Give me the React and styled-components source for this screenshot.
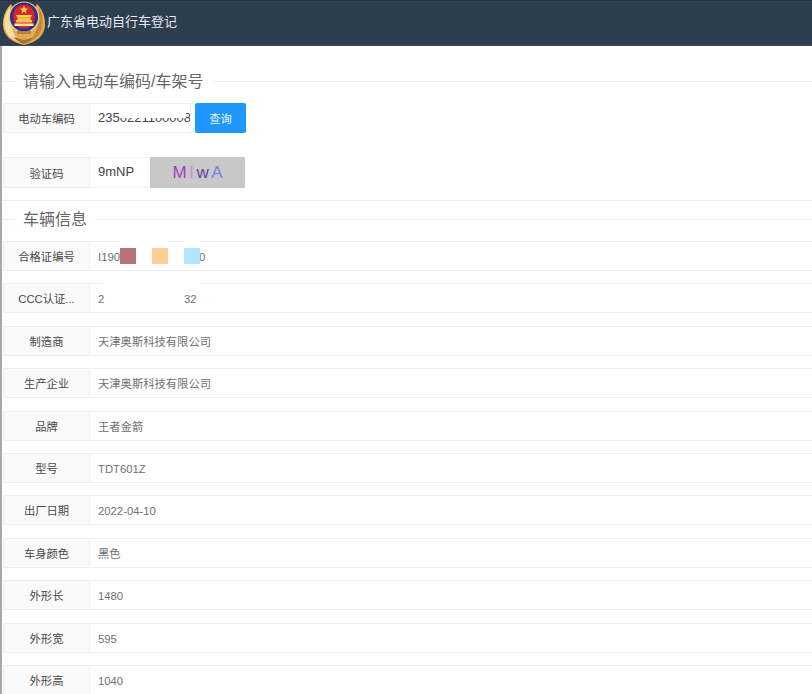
import React from "react";
import styled, { createGlobalStyle } from "styled-components";

const GlobalStyle = createGlobalStyle`
  html, body {
    margin: 0;
    padding: 0;
    background: #fff;
    overflow: hidden;
  }
  body {
    font-family: "Liberation Sans", "Noto Sans CJK SC", sans-serif;
  }
`;

const rows = [
  { label: "合格证编号", value: "I190", tail: "0", masks: "blocks" },
  { label: "CCC认证...", value: "2", tail: "32", masks: "plain", wide: true },
  { label: "制造商", value: "天津奥斯科技有限公司" },
  { label: "生产企业", value: "天津奥斯科技有限公司" },
  { label: "品牌", value: "王者金箭" },
  { label: "型号", value: "TDT601Z" },
  { label: "出厂日期", value: "2022-04-10" },
  { label: "车身颜色", value: "黑色" },
  { label: "外形长", value: "1480" },
  { label: "外形宽", value: "595" },
  { label: "外形高", value: "1040" },
];

function Emblem() {
  return (
    <svg width="46" height="46" viewBox="0 0 46 46">
      {/* wreath */}
      <path d="M10 4C4 10 1.500 18 2 26C3 36 10 42 23 45C36 42 43 36 44 26C44.500 18 42 10 36 4L23 28Z" fill="#e2ab52" />
      <path d="M9 7C4 13 2.500 20 3.500 27C5 35 11 40 20 43C14 37 8 30 9 7Z" fill="#f8e0a4" />
      <path d="M12 37C16 41 20 43 23 44C26 43 30 41 34 37L23 40Z" fill="#a8732c" />
      <path d="M38 8C42 16 43 25 39 33C37 37 33 39 28 42C35 34 39 25 38 8Z" fill="#c4883a" />
      {/* shield */}
      <ellipse cx="23" cy="17.500" rx="15.500" ry="16" fill="#ecc873" />
      <ellipse cx="23" cy="17" rx="14" ry="14.500" fill="#2b2f94" />
      <ellipse cx="23" cy="16.500" rx="11" ry="12" fill="#d7262b" />
      {/* star and gate */}
      <path d="M23 5.500l1.100 3h3.100l-2.500 1.900 1 3-2.700-1.800-2.700 1.800 1-3-2.500-1.900h3.100z" fill="#f7d64a" />
      <path d="M15 15h16l-1.500 2.500h-13z" fill="#f7d64a" />
      <path d="M16.500 17.500h13V20H31v2.500H15V20h1.500z" fill="#f1c64c" />
      <rect x="13.500" y="23.500" width="19" height="2.500" fill="#fbe6a0" />
      <rect x="16" y="31" width="14" height="3" fill="#b5833a" />
    </svg>
  );
}

export default function App() {
  return (
    <Page>
      <GlobalStyle />
      <Header>
        <EmblemSlot>
          <Emblem />
        </EmblemSlot>
        <HeaderTitle>广东省电动自行车登记</HeaderTitle>
      </Header>
      <Body>
        <SectionTitle $top={24}>请输入电动车编码/车架号</SectionTitle>
        <QueryRow>
          <Label>电动车编码</Label>
          <CodeBox>
            2350221100008
            <CodeMask />
          </CodeBox>
          <SearchButton>查询</SearchButton>
        </QueryRow>
        <CaptchaRow>
          <Label>验证码</Label>
          <CaptchaInput>9mNP</CaptchaInput>
          <CaptchaImage>
            <CaptchaChar $color="#a23fc4">M</CaptchaChar>
            <CaptchaChar $color="#cf8fb0">I</CaptchaChar>
            <CaptchaChar $color="#6541a8">w</CaptchaChar>
            <CaptchaChar $color="#6f86dc">A</CaptchaChar>
          </CaptchaImage>
        </CaptchaRow>
        <Rule />
        <SectionTitle $top={7}>车辆信息</SectionTitle>
        <InfoList>
          {rows.map((row) => (
            <InfoRow key={row.label}>
              <Label>{row.label}</Label>
              <Value>
                {row.value}
                {row.tail && <Tail $wide={row.wide}>{row.tail}</Tail>}
                {row.masks === "blocks" && (
                  <>
                    <WhiteMask $left={120} $width={48} />
                    <WhiteMask $left={184} $width={16} />
                    <Block $left={120} $color="#b87474" />
                    <Block $left={152} $color="#ffcf99" />
                    <Block $left={184} $color="#b3e5ff" />
                  </>
                )}
                {row.masks === "plain" && <WhiteMask $left={104} $width={96} $tall />}
              </Value>
            </InfoRow>
          ))}
        </InfoList>
      </Body>
    </Page>
  );
}

const Page = styled.div`
  width: 812px;
  height: 694px;
  overflow: hidden;
  position: relative;
`;

const Header = styled.header`
  height: 46px;
  box-sizing: border-box;
  background: #2c3e50;
  border-top: 1px solid #24303d;
  border-bottom: 1px solid #35485c;
  display: flex;
  align-items: center;
`;

const EmblemSlot = styled.div`
  width: 46px;
  height: 46px;
  margin-left: 1px;
  flex-shrink: 0;
  svg {
    display: block;
  }
`;

const HeaderTitle = styled.h1`
  margin: 0 0 2px;
  font-size: 13px;
  font-weight: 400;
  line-height: 20px;
  color: #e6eaee;
`;

const Body = styled.main`
  border-left: 2px solid #a9a9a9;
  height: 648px;
  box-sizing: border-box;
  display: flow-root;
`;

const SectionTitle = styled.h2`
  margin: ${(p) => p.$top}px 0 13px;
  height: 20px;
  display: flex;
  align-items: center;
  font-size: 16px;
  font-weight: 400;
  color: #666;
  &::before,
  &::after {
    content: "";
    height: 1px;
    background: #eee;
    transform: translateY(1px);
  }
  &::before {
    width: 13px;
    margin-right: 8px;
  }
  &::after {
    flex: 1;
    margin-left: 8px;
  }
`;

const Label = styled.div`
  width: 87px;
  margin-left: 1px;
  flex-shrink: 0;
  box-sizing: border-box;
  background: #fafafa;
  border: 1px solid #eee;
  border-right: 1px solid #f0f0f0;
  border-radius: 2px 0 0 2px;
  font-size: 11.300px;
  color: #484848;
  display: flex;
  align-items: center;
  justify-content: center;
`;

const QueryRow = styled.div`
  display: flex;
  height: 30px;
`;

const CodeBox = styled.div`
  width: 101px;
  box-sizing: border-box;
  border: 1px solid #eee;
  border-left: none;
  padding-left: 8px;
  font-size: 13px;
  line-height: 28px;
  color: #444;
  white-space: nowrap;
  overflow: hidden;
  position: relative;
`;

const CodeMask = styled.span`
  position: absolute;
  left: 30px;
  top: 0;
  width: 66px;
  height: 14px;
  background: #fff;
`;

const SearchButton = styled.button`
  width: 51px;
  margin-left: 4px;
  border: none;
  border-radius: 2px;
  background: #2097fb;
  color: #eaf5ff;
  font-family: inherit;
  font-size: 11.300px;
  padding: 0;
`;

const CaptchaRow = styled.div`
  display: flex;
  height: 31px;
  margin-top: 24px;
`;

const CaptchaInput = styled.div`
  width: 60px;
  box-sizing: border-box;
  border-top: 1px solid #f2f2f2;
  border-bottom: 1px solid #f2f2f2;
  padding-left: 8px;
  font-size: 13px;
  line-height: 28px;
  color: #444;
`;

const CaptchaImage = styled.div`
  width: 95px;
  background: #c8c8c8;
  display: flex;
  align-items: center;
  justify-content: center;
  gap: 2.500px;
  font-size: 17px;
`;

const CaptchaChar = styled.span`
  color: ${(p) => p.$color};
`;

const Rule = styled.div`
  height: 1px;
  margin-top: 12px;
  background: #eee;
`;

const InfoList = styled.div`
  display: flex;
  flex-direction: column;
  gap: 12.400px;
`;

const InfoRow = styled.div`
  display: flex;
  height: 30px;
  flex-shrink: 0;
`;

const Value = styled.div`
  flex: 1;
  box-sizing: border-box;
  border: 1px solid #eee;
  border-left: none;
  border-right: none;
  padding-left: 8px;
  font-size: 11.300px;
  line-height: 30px;
  color: #707070;
  white-space: nowrap;
  position: relative;
`;

const Tail = styled.span`
  position: absolute;
  left: ${(p) => (p.$wide ? 94 : 109)}px;
  top: 0;
`;

const WhiteMask = styled.span`
  position: absolute;
  left: ${(p) => p.$left - 90}px;
  top: -1px;
  width: ${(p) => p.$width}px;
  height: ${(p) => (p.$tall ? 12 : 7)}px;
  background: #fff;
`;

const Block = styled.span`
  position: absolute;
  left: ${(p) => p.$left - 90}px;
  top: 6px;
  width: 16px;
  height: 16px;
  background: ${(p) => p.$color};
`;
